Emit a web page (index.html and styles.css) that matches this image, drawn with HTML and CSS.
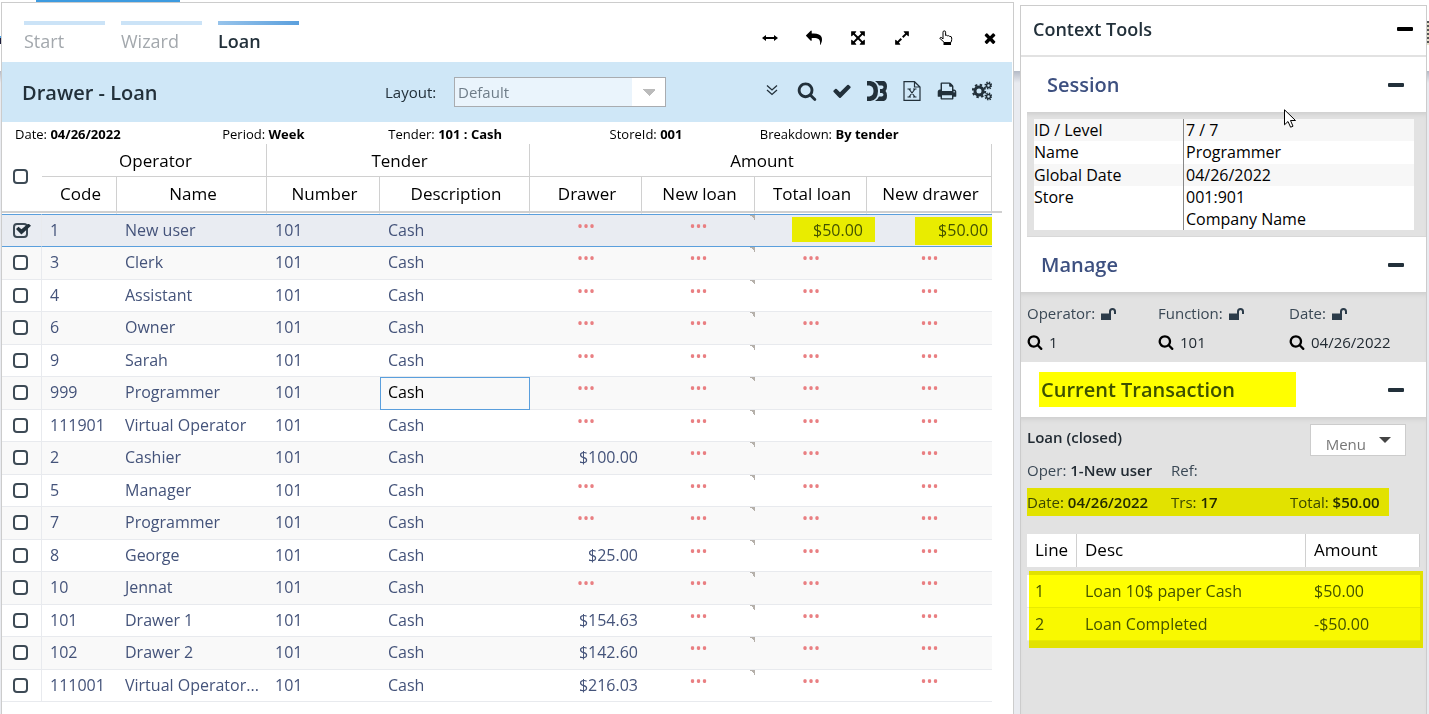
FILE: index.html
```html
<!DOCTYPE html>
<html lang="en">
<head>
<meta charset="utf-8">
<title>Drawer - Loan</title>
<link rel="stylesheet" href="styles.css">
</head>
<body>
<svg class="sprite" aria-hidden="true">
  <symbol id="i-search" viewBox="0 0 1792 1792"><path d="M1216 832q0-185-131.500-316.500t-316.500-131.500-316.500 131.500-131.500 316.500 131.500 316.500 316.500 131.500 316.500-131.500 131.500-316.500zm512 832q0 52-38 90t-90 38q-54 0-90-38l-343-342q-179 124-399 124-143 0-273.500-55.500t-225-150-150-225-55.500-273.500 55.500-273.500 150-225 225-150 273.500-55.500 273.500 55.500 225 150 150 225 55.500 273.500q0 220-124 399l343 343q37 37 37 90z"/></symbol>
  <symbol id="i-check" viewBox="0 0 1792 1792"><path d="M1671 566q0 40-28 68l-724 724-136 136q-28 28-68 28t-68-28l-136-136-362-362q-28-28-28-68t28-68l136-136q28-28 68-28t68 28l294 295 656-657q28-28 68-28t68 28l136 136q28 28 28 68z"/></symbol>
  <symbol id="i-unlock" viewBox="0 0 15 13"><path d="M0 6.500h8V4.500a3.500 3.500 0 0 1 7 0V7h-2V4.500a1.500 1.500 0 0 0-3 0v2V13H0z"/></symbol>
  <symbol id="i-minus" viewBox="0 0 16 4"><rect width="16" height="4" rx="1"/></symbol>
</svg>
<div class="app">
  <main class="panel">
    <header class="crumbs">
      <nav class="steps">
        <a href="#" class="step">Start</a>
        <a href="#" class="step">Wizard</a>
        <a href="#" class="step step-on">Loan</a>
      </nav>
      <div class="window-tools">
        <button aria-label="Width"><svg viewBox="0 0 16 16"><path d="M0 8l4-3v2h8V5l4 3-4 3V9H4v2z"/></svg></button>
        <button aria-label="Back"><svg viewBox="0 0 1792 1792"><path transform="translate(1792 0) scale(-1 1)" d="M1792 640q0 26-19 45l-512 512q-19 19-45 19t-45-19-19-45v-256h-224q-98 0-175.500 6t-154 21.500-133 42.500-105.500 69.500-80 101-48.500 138.500-17.500 181q0 55 5 123 0 6 2.500 23.500t2.500 26.500q0 15-8.500 25t-23.500 10q-16 0-28-17-7-9-13-22t-13.500-30-10.500-24q-127-285-127-451 0-199 53-333 162-403 875-403h224v-256q0-26 19-45t45-19 45 19l512 512q19 19 19 45z"/></svg></button>
        <button aria-label="Move"><svg viewBox="0 0 1792 1792"><path d="M1411 541l-355 355 355 355 144-144q29-31 70-14 39 17 39 59v448q0 26-19 45t-45 19h-448q-42 0-59-40-17-39 14-69l144-144-355-355-355 355 144 144q31 30 14 69-17 40-59 40h-448q-26 0-45-19t-19-45v-448q0-42 40-59 39-17 69 14l144 144 355-355-355-355-144 144q-19 19-45 19-12 0-24-5-40-17-40-59v-448q0-26 19-45t45-19h448q42 0 59 40 17 39-14 69l-144 144 355 355 355-355-144-144q-31-30-14-69 17-40 59-40h448q26 0 45 19t19 45v448q0 42-39 59-13 5-25 5-26 0-45-19z"/></svg></button>
        <button aria-label="Expand"><svg viewBox="0 0 1792 1792"><path d="M883 1056q0 13-10 23l-332 332 144 144q19 19 19 45t-19 45-45 19h-448q-26 0-45-19t-19-45v-448q0-26 19-45t45-19 45 19l144 144 332-332q10-10 23-10t23 10l114 114q10 10 10 23zm781-864v448q0 26-19 45t-45 19-45-19l-144-144-332 332q-10 10-23 10t-23-10l-114-114q-10-10-10-23t10-23l332-332-144-144q-19-19-19-45t19-45 45-19h448q26 0 45 19t19 45z"/></svg></button>
        <button aria-label="Touch"><svg viewBox="0 0 16 16"><path fill="none" stroke="currentColor" stroke-width="1" d="M5 9V2.200a1.300 1.300 0 0 1 2.600 0V5.500q1-.6 2 .3 1-.5 1.800.5 2.300-.2 2.300 1.700v1.500q0 1.500-.9 3H6q-1-2-3.500-3.300Q1.200 8 2.500 7.400q1.300-.2 2.500 1.600"/><path d="M5.500 12.300h7.500V15H5.500z"/></svg></button>
        <button aria-label="Close"><svg viewBox="0 0 1792 1792"><path d="M1490 1322q0 40-28 68l-136 136q-28 28-68 28t-68-28l-294-294-294 294q-28 28-68 28t-68-28l-136-136q-28-28-28-68t28-68l294-294-294-294q-28-28-28-68t28-68l136-136q28-28 68-28t68 28l294 294 294-294q28-28 68-28t68 28l136 136q28 28 28 68t-28 68l-294 294 294 294q28 28 28 68z"/></svg></button>
      </div>
    </header>
    <div class="titlebar">
      <h1>Drawer - Loan</h1>
      <label for="layout">Layout:</label>
      <select id="layout"><option>Default</option></select>
      <div class="actions">
        <button aria-label="More"><svg viewBox="0 0 20 20"><path fill="none" stroke="currentColor" stroke-width="1.300" d="M5 4.500l5 4.500 5-4.500M5 9l5 4.500L15 9"/></svg></button>
        <button aria-label="Search"><svg><use href="#i-search"/></svg></button>
        <button aria-label="Accept"><svg><use href="#i-check"/></svg></button>
        <button aria-label="D3"><svg viewBox="0 0 20 20"><path d="M0 0h3.500q7.500 1 7.500 10T3.500 20H0v-4.500h2.500q4-.8 4-5.500T2.500 4.500H0zM8 0h9q3 1 3 5.500 0 3-1.500 4.500 1.500 1.500 1.500 4.500 0 4.500-3 5.500H8q3-2 4-4.500h3q1.500-.5 1.500-1.700T15 12h-2v-4h2q1.500-.5 1.500-1.800T15 4.500h-3Q11 2 8 0z"/></svg></button>
        <button aria-label="Excel"><svg viewBox="0 0 20 20"><path fill="none" stroke="currentColor" stroke-width="1.200" d="M2 .7h10.500L18 6v13.300H2zM12.500.7V6H18"/><path fill="none" stroke="currentColor" stroke-width="1.200" d="M5.500 8h3.500M11 8h3.500M5.500 16h3.500M11 16h3.500M7 8l6 8M13 8l-6 8"/></svg></button>
        <button aria-label="Print"><svg viewBox="0 0 1792 1792"><path d="M448 1536h896v-256h-896v256zm0-640h896v-384h-160q-40 0-68-28t-28-68v-160h-640v640zm1152 64q0-26-19-45t-45-19-45 19-19 45 19 45 45 19 45-19 19-45zm128 0v416q0 13-9.500 22.500t-22.500 9.500h-224v160q0 40-28 68t-68 28h-960q-40 0-68-28t-28-68v-160h-224q-13 0-22.500-9.500t-9.500-22.500v-416q0-79 56.500-135.500t135.500-56.500h64v-544q0-40 28-68t68-28h672q40 0 88 20t76 48l152 152q28 28 48 76t20 88v256h64q79 0 135.500 56.500t56.500 135.500z"/></svg></button>
        <button aria-label="Settings"><svg viewBox="0 0 20 20"><g fill="none" stroke="currentColor"><circle cx="7" cy="10" r="4" stroke-width="3"/><circle cx="7" cy="10" r="6.200" stroke-width="2" stroke-dasharray="2.400 2.470"/><circle cx="16.500" cy="4.500" r="2" stroke-width="1.500"/><circle cx="16.500" cy="4.500" r="3.300" stroke-width="1.400" stroke-dasharray="1.400 1.192"/><circle cx="16.500" cy="15.500" r="2" stroke-width="1.500"/><circle cx="16.500" cy="15.500" r="3.300" stroke-width="1.400" stroke-dasharray="1.400 1.192"/></g></svg></button>
      </div>
    </div>
    <div class="facts">
      <span>Date: <b>04/26/2022</b></span>
      <span>Period: <b>Week</b></span>
      <span>Tender: <b>101 : Cash</b></span>
      <span>StoreId: <b>001</b></span>
      <span>Breakdown: <b>By tender</b></span>
    </div>
    <table class="grid">
      <colgroup><col class="c-pick"><col class="c-code"><col class="c-name"><col class="c-num"><col class="c-name"><col class="c-sum"><col class="c-num"><col class="c-sum"><col class="c-last"></colgroup>
      <thead>
        <tr class="groups"><th rowspan="2" class="pick"><input type="checkbox" aria-label="Select all"></th><th colspan="2">Operator</th><th colspan="2">Tender</th><th colspan="4">Amount</th></tr>
        <tr class="heads"><th>Code</th><th>Name</th><th>Number</th><th>Description</th><th>Drawer</th><th>New loan</th><th>Total loan</th><th>New drawer</th></tr>
      </thead>
      <tbody>
        <tr class="chosen"><td class="pick"><input type="checkbox" aria-label="Select" checked></td><td>1</td><td>New user</td><td>101</td><td>Cash</td><td class="none">•••</td><td class="none edit">•••</td><td class="money"><mark class="ink-total">$50.00</mark></td><td class="money"><mark class="ink-drawer">$50.00</mark></td></tr>
        <tr><td class="pick"><input type="checkbox" aria-label="Select"></td><td>3</td><td>Clerk</td><td>101</td><td>Cash</td><td class="none">•••</td><td class="none edit">•••</td><td class="none">•••</td><td class="none">•••</td></tr>
        <tr><td class="pick"><input type="checkbox" aria-label="Select"></td><td>4</td><td>Assistant</td><td>101</td><td>Cash</td><td class="none">•••</td><td class="none edit">•••</td><td class="none">•••</td><td class="none">•••</td></tr>
        <tr><td class="pick"><input type="checkbox" aria-label="Select"></td><td>6</td><td>Owner</td><td>101</td><td>Cash</td><td class="none">•••</td><td class="none edit">•••</td><td class="none">•••</td><td class="none">•••</td></tr>
        <tr><td class="pick"><input type="checkbox" aria-label="Select"></td><td>9</td><td>Sarah</td><td>101</td><td>Cash</td><td class="none">•••</td><td class="none edit">•••</td><td class="none">•••</td><td class="none">•••</td></tr>
        <tr><td class="pick"><input type="checkbox" aria-label="Select"></td><td>999</td><td>Programmer</td><td>101</td><td class="focus">Cash</td><td class="none">•••</td><td class="none edit">•••</td><td class="none">•••</td><td class="none">•••</td></tr>
        <tr><td class="pick"><input type="checkbox" aria-label="Select"></td><td>111901</td><td>Virtual Operator</td><td>101</td><td>Cash</td><td class="none">•••</td><td class="none edit">•••</td><td class="none">•••</td><td class="none">•••</td></tr>
        <tr><td class="pick"><input type="checkbox" aria-label="Select"></td><td>2</td><td>Cashier</td><td>101</td><td>Cash</td><td class="money">$100.00</td><td class="none edit">•••</td><td class="none">•••</td><td class="none">•••</td></tr>
        <tr><td class="pick"><input type="checkbox" aria-label="Select"></td><td>5</td><td>Manager</td><td>101</td><td>Cash</td><td class="none">•••</td><td class="none edit">•••</td><td class="none">•••</td><td class="none">•••</td></tr>
        <tr><td class="pick"><input type="checkbox" aria-label="Select"></td><td>7</td><td>Programmer</td><td>101</td><td>Cash</td><td class="none">•••</td><td class="none edit">•••</td><td class="none">•••</td><td class="none">•••</td></tr>
        <tr><td class="pick"><input type="checkbox" aria-label="Select"></td><td>8</td><td>George</td><td>101</td><td>Cash</td><td class="money">$25.00</td><td class="none edit">•••</td><td class="none">•••</td><td class="none">•••</td></tr>
        <tr><td class="pick"><input type="checkbox" aria-label="Select"></td><td>10</td><td>Jennat</td><td>101</td><td>Cash</td><td class="none">•••</td><td class="none edit">•••</td><td class="none">•••</td><td class="none">•••</td></tr>
        <tr><td class="pick"><input type="checkbox" aria-label="Select"></td><td>101</td><td>Drawer 1</td><td>101</td><td>Cash</td><td class="money">$154.63</td><td class="none edit">•••</td><td class="none">•••</td><td class="none">•••</td></tr>
        <tr><td class="pick"><input type="checkbox" aria-label="Select"></td><td>102</td><td>Drawer 2</td><td>101</td><td>Cash</td><td class="money">$142.60</td><td class="none edit">•••</td><td class="none">•••</td><td class="none">•••</td></tr>
        <tr><td class="pick"><input type="checkbox" aria-label="Select"></td><td>111001</td><td>Virtual Operator...</td><td>101</td><td>Cash</td><td class="money">$216.03</td><td class="none edit">•••</td><td class="none">•••</td><td class="none">•••</td></tr>
      </tbody>
    </table>
  </main>
  <aside class="side">
    <header class="side-top"><h2>Context Tools</h2><button aria-label="Collapse"><svg><use href="#i-minus"/></svg></button></header>
    <section>
      <header class="side-head session-head"><h3>Session</h3><button aria-label="Collapse"><svg><use href="#i-minus"/></svg></button></header>
      <div class="session">
        <table>
          <tr><th>ID / Level</th><td>7 / 7</td></tr>
          <tr class="split"><th>Name</th><td>Programmer</td></tr>
          <tr><th>Global Date</th><td>04/26/2022</td></tr>
          <tr><th>Store</th><td>001:901<br>Company Name</td></tr>
        </table>
        <svg class="pointer" viewBox="0 0 12 19" aria-hidden="true"><path d="M.5.800v15l3.500-3.300 2.600 5.700 2.400-1-2.500-5.700h5z" fill="#fff" stroke="#000"/></svg>
      </div>
    </section>
    <section>
      <header class="side-head"><h3>Manage</h3><button aria-label="Collapse"><svg><use href="#i-minus"/></svg></button></header>
      <div class="side-body manage">
        <div><span>Operator:<svg class="lock"><use href="#i-unlock"/></svg></span><strong><svg class="lens"><use href="#i-search"/></svg>1</strong></div>
        <div><span>Function:<svg class="lock"><use href="#i-unlock"/></svg></span><strong><svg class="lens"><use href="#i-search"/></svg>101</strong></div>
        <div><span>Date:<svg class="lock"><use href="#i-unlock"/></svg></span><strong><svg class="lens"><use href="#i-search"/></svg>04/26/2022</strong></div>
      </div>
    </section>
    <section class="current">
      <header class="side-head"><h3><mark class="ink-title">Current Transaction</mark></h3><button aria-label="Collapse"><svg><use href="#i-minus"/></svg></button></header>
      <div class="side-body trans">
        <div class="status"><b>Loan (closed)</b><button class="menu">Menu<svg viewBox="0 0 12 6"><path d="M0 0h12L6 6z"/></svg></button></div>
        <div class="facts-row"><span>Oper: <b>1-New user</b></span><span>Ref:</span></div>
        <div class="facts-row"><mark class="ink-row"></mark><span>Date: <b>04/26/2022</b></span><span>Trs: <b>17</b></span><span>Total: <b>$50.00</b></span></div>
        <div class="lines">
          <table>
            <thead><tr><th class="l-line">Line</th><th class="l-desc">Desc</th><th>Amount</th></tr></thead>
            <tbody>
              <tr><td>1</td><td>Loan 10$ paper Cash</td><td>$50.00</td></tr>
              <tr><td>2</td><td>Loan Completed</td><td>-$50.00</td></tr>
            </tbody>
          </table>
          <mark class="ink-lines"></mark>
        </div>
      </div>
    </section>
  </aside>
</div>
</body>
</html>
```
FILE: styles.css
```css
* { box-sizing: border-box; }
body {
  margin: 0;
  min-height: 100vh;
  font-family: "Open Sans", sans-serif;
  font-size: 16px;
  color: #000;
  background:
    linear-gradient(#3d9be0, #3d9be0) 36px 0 / 144px 2px no-repeat,
    linear-gradient(#4aa3e8 2px, #1c1c3a 2px) 0 36px / 1px 8px no-repeat,
    repeating-linear-gradient(#555 0 2px, #e6e2c8 2px 4px) right 0 top 21px / 2px 24px no-repeat,
    linear-gradient(#b4bac6, #e9ebf0) 0 71px / 100% 12px no-repeat,
    linear-gradient(#fff 71px, #e9ebf0 71px);
}
h1, h2, h3 { margin: 0; font-weight: 600; }
button { border: 0; padding: 0; background: none; color: inherit; font: inherit; }
svg { fill: currentColor; display: block; }
mark { background: none; color: inherit; }
.sprite { position: absolute; width: 0; height: 0; }
.app { display: flex; gap: 6px; height: 100vh; padding: 2px 2px 0 1px; overflow: hidden; }

.panel { flex: 1; min-width: 0; background: #fff; border: 1px solid #ccc; border-bottom: 0; }
.crumbs { display: flex; justify-content: space-between; height: 59px; padding-left: 22px; }
.steps { display: flex; gap: 16px; padding-top: 18px; }
.step {
  width: 81px; height: 35px; border-top: 4px solid #cbe3f7;
  padding-top: 4px; font-size: 18px; line-height: 24px;
  color: #a3a8ad; text-decoration: none;
}
.step-on { border-image: linear-gradient(90deg, #98c4eb, #5a9fdd) 1; color: #22303a; font-weight: 600; }
.window-tools { display: flex; align-items: center; gap: 28px; padding: 10px 15px 0 0; }
.window-tools svg { width: 16px; height: 16px; }

.titlebar {
  display: flex; align-items: center; height: 60px; margin-right: 1px;
  padding: 0 20px; background: #cfe7f7; color: #22303a;
}
.titlebar h1 { width: 363px; font-size: 20px; }
.titlebar label { width: 69px; font-size: 15px; }
.titlebar select {
  appearance: none; width: 212px; height: 30px; padding: 0 3px;
  border: 1px solid #a9acb0; border-radius: 0; color: #6f7d89;
  font: 15px "Open Sans", sans-serif;
  background:
    conic-gradient(from 315deg at 50% 100%, #bbb 90deg, transparent 0) right 10px top 11px / 12px 7px no-repeat,
    linear-gradient(90deg, #eaf4fc calc(100% - 33px), #fff 0);
}
.actions { display: flex; align-items: center; gap: 15px; margin-left: auto; padding-bottom: 2px; }
.actions svg { width: 20px; height: 20px; }

.facts { display: grid; grid-template-columns: 207fr 166fr 221fr 150fr 253fr; height: 22px; padding-left: 13px; font-size: 13px; line-height: 24px; white-space: nowrap; }

.grid { width: calc(100% - 21px); table-layout: fixed; border-spacing: 0; }
.c-pick { width: 40px; }
.c-code { width: 75px; }
.c-name { width: 150px; }
.c-num { width: 113px; }
.c-sum { width: 112px; }
.c-last { width: 125px; }
.grid th { padding: 0 0 0 3px; border-right: 1px solid #d0d0d0; font-size: 17px; font-weight: 400; }
.groups th { height: 33px; border-bottom: 1px solid #d0d0d0; }
.grid .groups .pick { padding: 0 0 4px; border-right: 0; border-bottom: 1px solid #fff; box-shadow: inset 0 -2px #d0d0d0; }
.grid .heads th { height: 37px; padding-bottom: 4px; border-bottom: 1px solid #fff; box-shadow: inset 0 -2px #d0d0d0; }
.heads th:last-child { position: relative; }
.heads th:last-child::after { content: ""; position: absolute; right: -11px; bottom: 0; width: 10px; height: 2px; background: #d0d0d0; }
.grid td { height: 32px; padding: 0 8px 2px; border-bottom: 1px solid #e8eaee; color: #44537a; line-height: 20px; white-space: nowrap; overflow: hidden; }
.grid tr:nth-child(even) td, .grid .chosen td { height: 33px; }
.grid tr:nth-child(even) td { background-color: #f9f9f9; }
.grid .chosen td { background-color: #e9ecf2; border-top: 1px solid #5a9fdd; border-bottom-color: #5a9fdd; overflow: visible; }
.grid td.pick { padding: 0 0 1px; border-right: 1px solid #e8eaee; }
.grid .pick { text-align: left; }
.grid .focus { outline: 1px solid #5a9fdd; outline-offset: -1px; color: #000; }
.grid .none { padding-bottom: 10px; text-align: center; color: #e97f82; }
.grid .edit {
  background-image: linear-gradient(to top right, transparent 50%, #b5b0aa 50%);
  background-position: right top; background-size: 5px 5px; background-repeat: no-repeat;
}
.grid .money { padding-right: 4px; text-align: right; }
.pick input {
  appearance: none; display: block; width: 15px; height: 15px; margin: 0 0 0 11px;
  border: 2px solid #3d4a55; border-radius: 4px; background: #fff;
}
.pick input:checked { background: none; position: relative; }
.pick input:checked::after {
  content: ""; position: absolute; left: 1px; top: -1px; width: 15px; height: 11px;
  background: #22303a; clip-path: polygon(0 50%, 17% 30%, 36% 52%, 83% 0, 100% 20%, 36% 100%);
}

[class^="ink"] { position: relative; }
[class^="ink"]::after { content: ""; position: absolute; background: #ff0; mix-blend-mode: multiply; }
.ink-total::after { inset: -2px -12px -1px -21px; }
.ink-drawer::after { inset: -2px -4px -4px -23px; }
.ink-title::after { inset: -4px -61px -4px -2px; }
.facts-row .ink-row, .lines .ink-lines { position: absolute; background: #ff0; mix-blend-mode: multiply; }
.facts-row .ink-row { inset: 0 31px 0 0; }
.lines .ink-lines { inset: 37px -3px -7px 2px; }

.side { display: flex; flex-direction: column; width: 407px; margin-top: 3px; background: #fff; border: 1px solid #ccc; border-bottom: 0; }
.side-top { display: flex; align-items: center; justify-content: space-between; height: 51px; padding: 0 13px 3px 12px; border-bottom: 2px solid #e2e2e2; }
.side-top h2 { font-size: 18px; color: #22303a; }
.side button svg { width: 16px; height: 4px; }
.side-head { display: flex; align-items: center; justify-content: space-between; height: 55px; padding: 0 22px 0 20px; }
.side-head h3 { font-size: 20px; color: #3d5080; }
.side-head button { color: #22303a; }
.session-head { padding-left: 26px; }
.session { position: relative; margin-left: 6px; padding: 7px 12px 6px 7px; border-bottom: 1px solid #d8d8d8; background: #e2e2e2; box-shadow: inset 0 5px 5px -3px #ccc; }
.session table { width: 100%; border-spacing: 0; background: #fff; }
.session th { width: 150px; padding: 0; text-align: left; vertical-align: top; font-weight: 400; border-right: 1px solid #888; }
.session td { padding: 0 2px; }
.session th, .session td { line-height: 22px; }
.session .split td { padding-bottom: 1px; }
.session tr:nth-child(odd) { background: #f7f7f7; }
.pointer { position: absolute; left: 257px; top: -3px; width: 12px; height: 19px; }
.side-body { padding: 0 6px; background: #e2e2e2; box-shadow: inset 0 5px 5px -3px #ccc; font-size: 15px; color: #3a4855; }
.manage { display: grid; grid-template-columns: 131px 131px 1fr; height: 70px; padding-top: 10px; }
.manage span, .manage strong { display: flex; align-items: center; height: 22px; }
.manage strong { margin-top: 7px; font-weight: 400; color: #222b33; }
.lock { width: 15px; height: 13px; margin-left: 6px; color: #2c3c4a; }
.lens { width: 16px; height: 16px; margin-right: 6px; color: #000; }
.current { display: flex; flex: 1; flex-direction: column; }
.trans { flex: 1; }
.trans b { font-weight: 600; color: #222b33; }
.status { display: flex; justify-content: space-between; height: 39px; padding: 7px 14px 0 0; }
.status b { padding-top: 3px; }
.menu { display: flex; align-items: center; gap: 13px; height: 32px; padding: 8px 14px 0 15px; border: 1px solid #ccc; background: #fff; color: #777; }
.side .menu svg { width: 12px; height: 6px; margin-bottom: 9px; color: #444; }
.facts-row { position: relative; display: grid; grid-template-columns: 144px 119px 1fr; height: 28px; line-height: 28px; margin-bottom: 4px; }
.lines { position: relative; margin: 18px 0 0; }
.lines table { width: 100%; table-layout: fixed; border-spacing: 0; font-size: 16px; }
.lines th { height: 33px; padding: 0 8px 2px; background: #fff; color: #000; font-size: 17px; font-weight: 400; text-align: left; border-right: 1px solid #d0d0d0; }
.lines td { height: 33px; padding: 0 8px; background: #fff; border-bottom: 1px solid #e8eaee; color: #44537a; }
.lines tbody::before { content: ""; display: block; height: 8px; }
.lines tr:nth-child(even) td { padding-bottom: 1px; background: #f9f9f9; }
.l-line { width: 50px; }
.l-desc { width: 229px; }
```
